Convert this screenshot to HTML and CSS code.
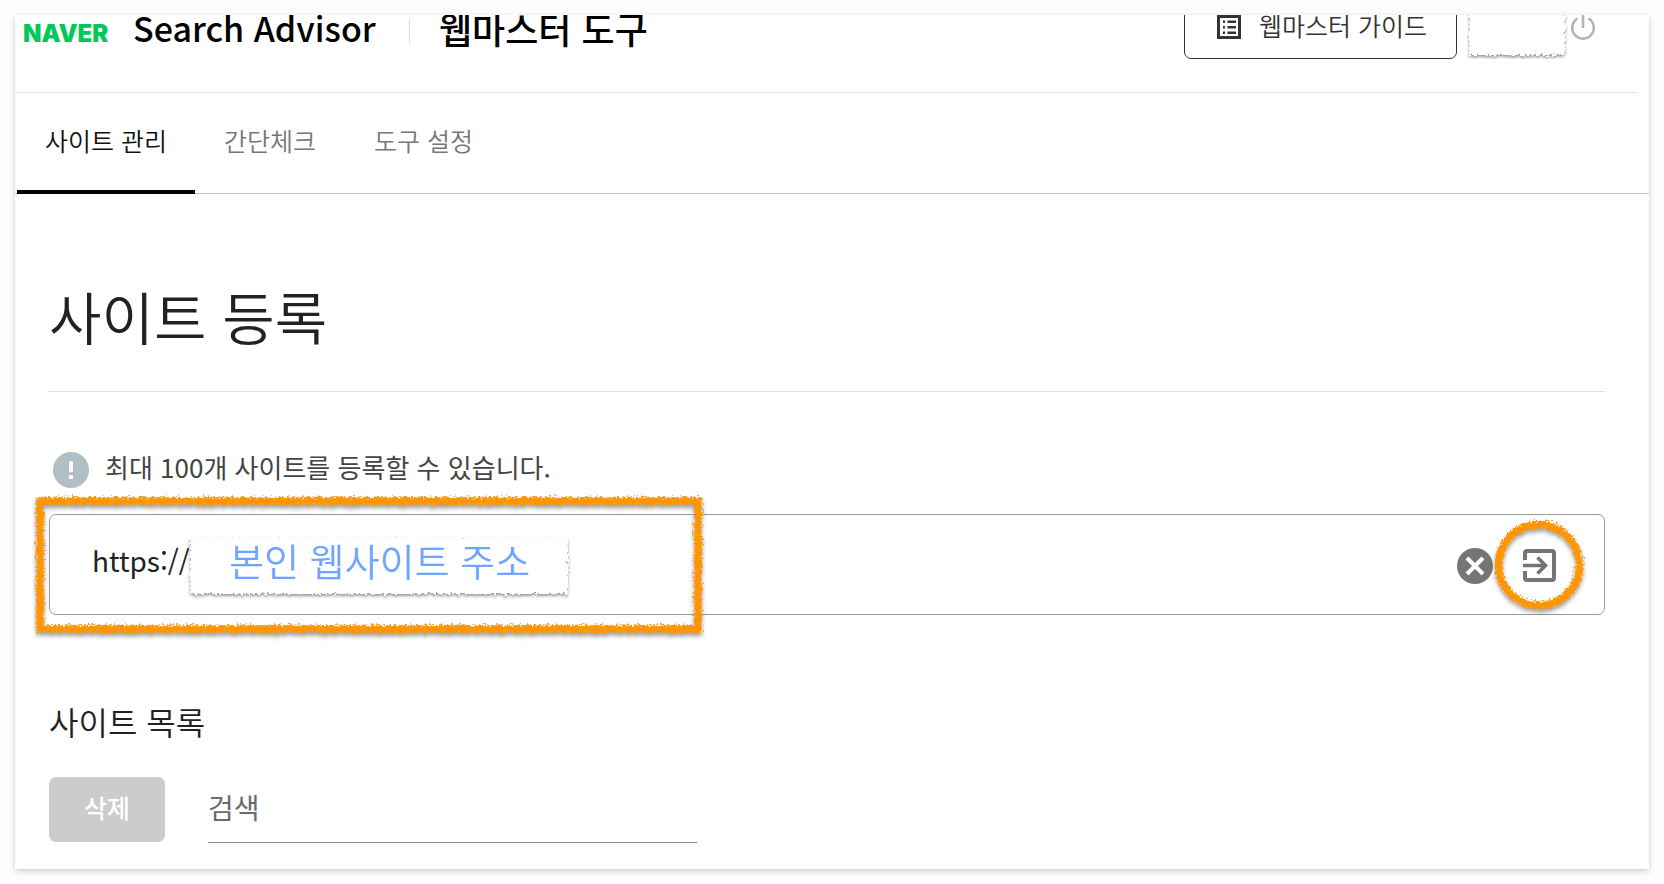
FILE: index.html
```html
<!DOCTYPE html>
<html lang="ko">
<head>
<meta charset="utf-8">
<title>Search Advisor 웹마스터 도구</title>
<link rel="stylesheet" href="styles.css">
</head>
<body>
<svg class="defs" width="0" height="0" aria-hidden="true">
  <filter id="crayon" filterUnits="userSpaceOnUse" x="-20" y="-20" width="740" height="200">
    <feTurbulence type="fractalNoise" baseFrequency="0.45" numOctaves="3" seed="4" result="n"/>
    <feDisplacementMap in="SourceGraphic" in2="n" scale="8" xChannelSelector="R" yChannelSelector="G" result="d"/>
    <feDropShadow in="d" dx="0" dy="3" stdDeviation="2" flood-color="#000" flood-opacity="0.4"/>
  </filter>
  <filter id="torn" filterUnits="userSpaceOnUse" x="-10" y="-10" width="420" height="90">
    <feTurbulence type="fractalNoise" baseFrequency="0.3" numOctaves="3" seed="9" result="n"/>
    <feDisplacementMap in="SourceGraphic" in2="n" scale="6" xChannelSelector="R" yChannelSelector="G" result="d"/>
    <feDropShadow in="d" dx="0" dy="2" stdDeviation="1.500" flood-color="#000" flood-opacity="0.4"/>
  </filter>
</svg>
<div class="panel">
  <header class="header">
    <span class="naver">NAVER</span>
    <span class="product">Search Advisor</span>
    <span class="section">웹마스터 도구</span>
    <a class="guide" href="#">
      <svg class="guide-icon" viewBox="0 0 24 24" aria-hidden="true"><path fill="none" stroke="currentColor" stroke-width="3" d="M1.5 1.500h21v21h-21z"/><path fill="currentColor" d="M6 5.500h2v2.500H6zM10.500 5.500h8.500v2.500h-8.500zM6 11h2v2.500H6zM10.500 11h8.500v2.500h-8.500zM6 16.500h2V19H6zM10.500 16.500h8.500V19h-8.500z"/></svg>
      <span class="guide-text">웹마스터 가이드</span>
    </a>
    <svg class="user" aria-hidden="true"><rect x="2" y="2" width="96" height="58" fill="#fff" filter="url(#torn)"/></svg>
    <button class="power" type="button" aria-label="로그아웃">
      <svg viewBox="0 0 26 26"><path fill="none" stroke="currentColor" stroke-width="2.600" d="M13 1v13M7.500 4.500a10.800 10.800 0 1 0 11 0"/></svg>
    </button>
  </header>

  <nav class="tabs">
    <a class="tab active" href="#">사이트 관리</a>
    <a class="tab" href="#">간단체크</a>
    <a class="tab" href="#">도구 설정</a>
  </nav>

  <main class="content">
    <h1 class="title">사이트 등록</h1>
    <p class="info">
      <svg class="info-icon" viewBox="0 0 36 36" aria-hidden="true"><circle cx="18" cy="18" r="18" fill="#b0bec5"/><path stroke="#fff" stroke-width="4" stroke-linecap="round" d="M18 11v7.500"/><path fill="#fff" d="M16 23h4v4h-4z"/></svg>
      <span class="info-text">최대 100개 사이트를 등록할 수 있습니다.</span>
    </p>
    <div class="field">
      <input class="url" type="text" value="https://" aria-label="사이트 주소">
      <button class="clear" type="button" aria-label="지우기">
        <svg viewBox="0 0 36 36"><circle cx="18" cy="18" r="18" fill="currentColor"/><path stroke="#fff" stroke-width="4" d="M10 10l16 16M26 10L10 26"/></svg>
      </button>
      <button class="submit" type="button" aria-label="등록">
        <svg class="submit-icon" viewBox="0 0 33 33"><path fill="none" stroke="currentColor" stroke-width="4" d="M2 11V4a2 2 0 0 1 2-2h25a2 2 0 0 1 2 2v25a2 2 0 0 1-2 2H4a2 2 0 0 1-2-2v-7"/><path fill="none" stroke="currentColor" stroke-width="3.600" d="M0 16.500h22M14.500 8.500l8 8-8 8"/></svg>
        <svg class="ring" viewBox="0 0 100 100"><circle cx="50" cy="50" r="40.500" fill="none" stroke="#ff9500" stroke-width="7.500" filter="url(#crayon)"/></svg>
      </button>
      <svg class="patch" aria-hidden="true"><rect x="2" y="2" width="378" height="57" fill="#fff" filter="url(#torn)"/></svg>
      <span class="hint">본인 웹사이트 주소</span>
      <svg class="box" aria-hidden="true"><rect x="8" y="9" width="658" height="128" fill="none" stroke="#ff9500" stroke-width="7.500" filter="url(#crayon)"/></svg>
    </div>

    <h2 class="subtitle">사이트 목록</h2>
    <div class="tools">
      <button class="delete" type="button" disabled>삭제</button>
      <input class="search" type="text" placeholder="검색" aria-label="검색">
    </div>
  </main>
</div>
</body>
</html>
```
FILE: styles.css
```css
* { box-sizing: border-box; }
body {
  margin: 0;
  padding: 15px;
  background: #fdfdfd;
  color: #222;
  font-family: "Noto Sans CJK KR", sans-serif;
}
button, input { font-family: inherit; }
button { border: 0; padding: 0; background: none; }
a { text-decoration: none; }
.defs { position: absolute; }
.panel {
  overflow: hidden;
  background: #fff;
  box-shadow: 0 2px 6px rgba(0, 0, 0, 0.2);
}
.header {
  display: flex;
  align-items: center;
  margin: -21px 12px 0 2px;
  padding: 0 41px 33px 6px;
  border-bottom: 1px solid #e0e0e0;
}
.naver {
  width: 110px;
  padding-top: 14px;
  color: #03c75a;
  font: 900 24px/28px Inter, sans-serif;
}
.product, .section {
  padding-top: 2px;
  color: #000;
  font-size: 34px;
  font-weight: 500;
  line-height: 50px;
}
.product { width: 276px; }
.section { position: relative; padding-left: 30px; font-size: 36px; }
.section::before {
  content: "";
  position: absolute;
  left: 0;
  top: 18px;
  height: 25px;
  border-left: 1px solid #ddd;
}
.guide {
  display: flex;
  align-items: center;
  gap: 18px;
  height: 65px;
  margin-left: auto;
  padding: 0 29px 0 32px;
  border: 1px solid #333;
  border-radius: 7px;
  color: #333;
  font-size: 25px;
  font-weight: 350;
}
.guide-text { padding-bottom: 4px; }
.guide-icon { width: 24px; height: 24px; }
.user { width: 103px; height: 64px; margin-left: 10px; }
.power { width: 26px; height: 26px; color: #b3b3b3; }
.power svg, .clear svg { display: block; width: 100%; height: 100%; }
.tabs {
  display: flex;
  height: 101px;
  padding-left: 2px;
  border-bottom: 1px solid #c4c4c4;
}
.tab {
  height: 101px;
  padding: 0 29px;
  color: #777;
  font-size: 25px;
  font-weight: 350;
  line-height: 94px;
}
.tab.active { padding: 0 28px; border-bottom: 4px solid #000; color: #111; }
.content { padding: 0 44px 26px 34px; }
.title {
  margin: 0;
  padding: 78px 0 32px;
  border-bottom: 1px solid #e0e0e0;
  font-size: 57px;
  font-weight: 350;
  line-height: 87px;
}
.info {
  display: flex;
  align-items: center;
  gap: 16px;
  margin: 58px 0 24px;
  padding-left: 4px;
  color: #444;
  font-size: 26px;
  line-height: 40px;
}
.info-text { margin: -3px 0 3px; }
.info-icon { width: 36px; height: 36px; }
.field {
  position: relative;
  display: flex;
  align-items: center;
  height: 101px;
  padding: 2px 21px 0 42px;
  border: 1px solid #999;
  border-radius: 7px;
}
.url {
  flex: 1;
  min-width: 0;
  border: 0;
  padding: 0 0 12px;
  background: none;
  color: #222;
  font-size: 28px;
}
.clear { width: 36px; height: 36px; color: #757575; }
.submit {
  position: relative;
  display: grid;
  place-items: center;
  width: 88px;
  height: 88px;
  margin-left: 2px;
  color: #757575;
}
.submit-icon { width: 33px; height: 33px; }
.ring { position: absolute; left: -6px; top: -7px; width: 100px; height: 100px; }
.patch { position: absolute; left: 138px; top: 20px; width: 390px; height: 66px; }
.hint {
  position: absolute;
  left: 179px;
  top: 17px;
  color: #6fa4ff;
  font-size: 38px;
  font-weight: 350;
  line-height: 56px;
}
.box { position: absolute; left: -18px; top: -23px; width: 680px; height: 150px; pointer-events: none; }
.subtitle {
  margin: 82px 0 32px;
  font-size: 32px;
  font-weight: 350;
  line-height: 48px;
}
.tools { display: flex; gap: 43px; }
.delete {
  width: 116px;
  height: 65px;
  padding-bottom: 5px;
  border-radius: 7px;
  background: #ccc;
  color: #fff;
  font-size: 25px;
  font-weight: 500;
}
.search {
  width: 489px;
  height: 66px;
  border: 0;
  border-bottom: 1px solid #888;
  padding: 0 0 5px;
  background: none;
  color: #222;
  font-size: 28px;
}
.search::placeholder { color: #6b6b6b; }
```
